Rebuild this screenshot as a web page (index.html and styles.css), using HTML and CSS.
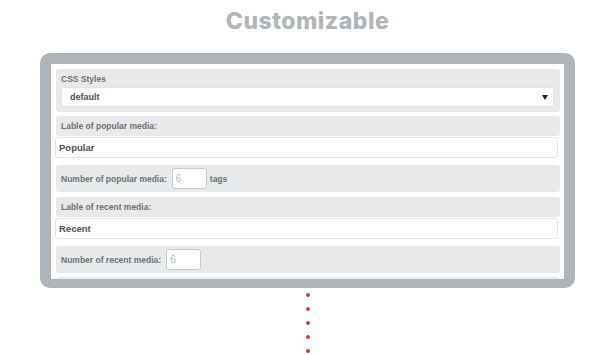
FILE: index.html
```html
<!DOCTYPE html>
<html>
<head>
  <meta charset="utf-8">
  <title>Customizable</title>
  <link rel="stylesheet" href="styles.css">
</head>
<body>
  <h1 class="title">Customizable</h1>

  <div class="frame">
    <div class="settings">
      <div class="field">
        <label>CSS Styles</label>
        <div class="select">
          <span>default</span>
          <span class="caret"></span>
        </div>
      </div>

      <div class="field">
        <label>Lable of popular media:</label>
      </div>
      <input class="text" type="text" value="Popular">

      <div class="field inline">
        <label>Number of popular media:</label>
        <input class="num" type="text" placeholder="6">
        <span class="unit">tags</span>
      </div>

      <div class="field">
        <label>Lable of recent media:</label>
      </div>
      <input class="text" type="text" value="Recent">

      <div class="field inline">
        <label>Number of recent media:</label>
        <input class="num" type="text" placeholder="6">
      </div>

      <!-- next setting, scrolled out of view -->
      <div class="field empty"></div>
    </div>
  </div>

  <div class="dots">
    <span></span>
    <span></span>
    <span></span>
    <span></span>
    <span></span>
  </div>
</body>
</html>
```

FILE: styles.css
```css
body {
  margin: 0;
  padding-top: 8px;
  background: #fff;
  font-family: "Liberation Sans", Arial, sans-serif;
}

.title {
  margin: 0 0 18px;
  font-family: Inter, "Open Sans", sans-serif;
  font-weight: 800;
  font-size: 23px;
  line-height: 27px;
  letter-spacing: 0.5px;
  text-align: center;
  color: #b0b5b8;
}

.frame {
  width: 513px;
  margin: 0 auto;
  border: solid #aeb4b7;
  border-width: 11px 11px 9px;
  border-radius: 10px;
  background: #fff;
}

.settings {
  height: 215px;
  overflow: hidden;
  padding: 5px 4px 0 5px;
  box-sizing: border-box;
}

.field {
  background: #e7e9ea;
  border-radius: 3px;
  padding: 4px 6px 5px 5px;
  margin-bottom: 4px;
}

.field.empty {
  height: 20px;
}

.field label {
  display: block;
  font-size: 8.5px;
  font-weight: bold;
  line-height: 12px;
  color: #6a7378;
}

.field:first-child label {
  margin-bottom: 2px;
}

.field:nth-child(2),
.field:nth-child(5) {
  padding-bottom: 4px;
}

.select {
  display: flex;
  align-items: center;
  justify-content: space-between;
  height: 20px;
  box-sizing: border-box;
  padding: 0 5px 0 8px;
  background: #fff;
  border: 1px solid #e1e4e5;
  border-radius: 3px;
  font-size: 9px;
  font-weight: bold;
  color: #4a5257;
}

.caret {
  width: 0;
  height: 0;
  border-left: 3px solid transparent;
  border-right: 3px solid transparent;
  border-top: 5px solid #1e2225;
}

input.text {
  display: block;
  width: 503px;
  height: 21px;
  box-sizing: border-box;
  margin: -3px 0 7px -1px;
  padding: 0 3px;
  background: #fff;
  border: 1px solid #e1e4e5;
  border-radius: 3px;
  font-family: "Liberation Sans", Arial, sans-serif;
  font-size: 9.5px;
  font-weight: bold;
  color: #4a5257;
  outline: none;
}

.field.inline {
  display: flex;
  align-items: center;
  padding: 3px 5px;
}

.field.inline:nth-child(4) {
  margin-bottom: 5px;
}

.num {
  width: 35px;
  height: 21px;
  box-sizing: border-box;
  margin-left: 5px;
  padding: 0 3px;
  background: #fff;
  border: 1px solid #c4c9cc;
  border-radius: 3px;
  font-family: "Liberation Sans", Arial, sans-serif;
  font-size: 10px;
  outline: none;
}

.num::placeholder {
  color: #b4b9bd;
}

.unit {
  margin-left: 3px;
  font-size: 8.5px;
  font-weight: bold;
  color: #6a7378;
}

.dots {
  display: flex;
  flex-direction: column;
  align-items: center;
  gap: 10px;
  padding-top: 5px;
}

.dots span {
  width: 4px;
  height: 4px;
  border-radius: 50%;
  background: #e2363e;
}
```
